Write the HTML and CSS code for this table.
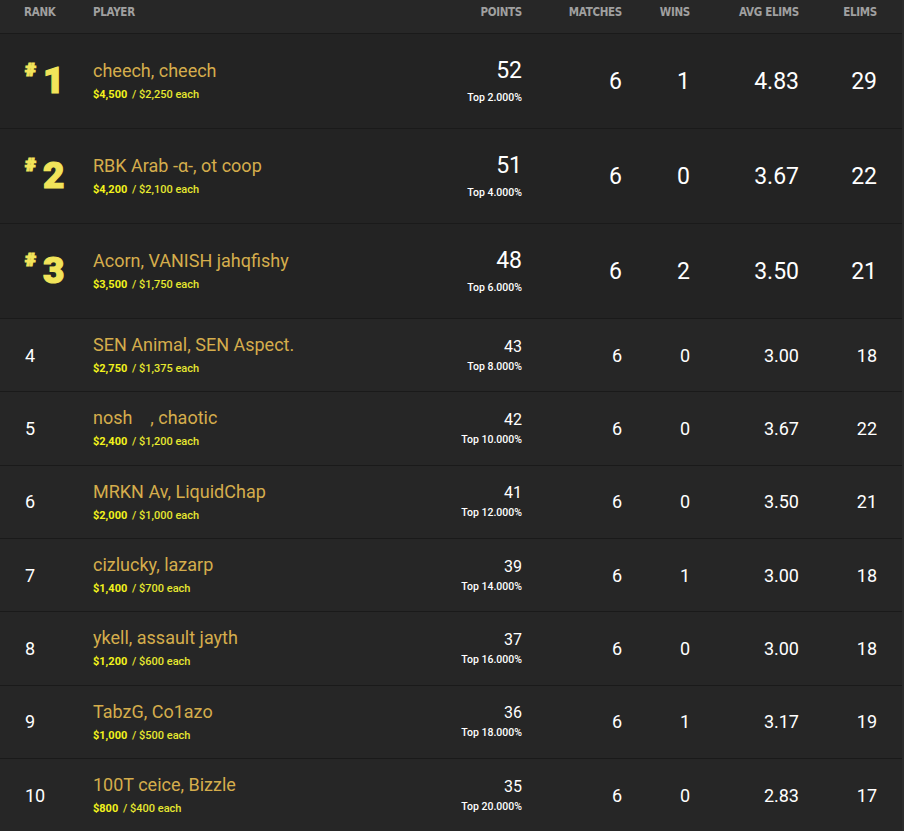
FILE: index.html
```html
<!DOCTYPE html>
<html lang="en">
<head>
    <meta charset="UTF-8">
    <meta name="viewport" content="width=device-width, initial-scale=1.0">
    <title>Leaderboard</title>
    <link rel="stylesheet" href="styles.css">
</head>
<body>
    <div class="board">
        <div class="row head">
            <div>Rank</div>
            <div>Player</div>
            <div class="num">Points</div>
            <div class="num">Matches</div>
            <div class="num">Wins</div>
            <div class="num">Avg Elims</div>
            <div class="num">Elims</div>
        </div>

        <div class="row top">
            <div class="badge"><span class="hash">#</span><span class="place">1</span></div>
            <div class="player">
                <div class="name">cheech, cheech</div>
                <div class="prize"><b>$4,500</b> / $2,250 each</div>
            </div>
            <div class="num points"><div class="pts">52</div><div class="pct">Top 2.000%</div></div>
            <div class="num stat">6</div>
            <div class="num stat">1</div>
            <div class="num stat">4.83</div>
            <div class="num stat">29</div>
        </div>

        <div class="row top">
            <div class="badge"><span class="hash">#</span><span class="place">2</span></div>
            <div class="player">
                <div class="name">RBK Arab -α-, ot coop</div>
                <div class="prize"><b>$4,200</b> / $2,100 each</div>
            </div>
            <div class="num points"><div class="pts">51</div><div class="pct">Top 4.000%</div></div>
            <div class="num stat">6</div>
            <div class="num stat">0</div>
            <div class="num stat">3.67</div>
            <div class="num stat">22</div>
        </div>

        <div class="row top">
            <div class="badge"><span class="hash">#</span><span class="place">3</span></div>
            <div class="player">
                <div class="name">Acorn, VANISH jahqfishy</div>
                <div class="prize"><b>$3,500</b> / $1,750 each</div>
            </div>
            <div class="num points"><div class="pts">48</div><div class="pct">Top 6.000%</div></div>
            <div class="num stat">6</div>
            <div class="num stat">2</div>
            <div class="num stat">3.50</div>
            <div class="num stat">21</div>
        </div>

        <div class="row reg">
            <div class="rank">4</div>
            <div class="player">
                <div class="name">SEN Animal, SEN Aspect.</div>
                <div class="prize"><b>$2,750</b> / $1,375 each</div>
            </div>
            <div class="num points"><div class="pts">43</div><div class="pct">Top 8.000%</div></div>
            <div class="num stat">6</div>
            <div class="num stat">0</div>
            <div class="num stat">3.00</div>
            <div class="num stat">18</div>
        </div>

        <div class="row reg">
            <div class="rank">5</div>
            <div class="player">
                <div class="name">nosh&nbsp;&nbsp;&nbsp;&nbsp;, chaotic</div>
                <div class="prize"><b>$2,400</b> / $1,200 each</div>
            </div>
            <div class="num points"><div class="pts">42</div><div class="pct">Top 10.000%</div></div>
            <div class="num stat">6</div>
            <div class="num stat">0</div>
            <div class="num stat">3.67</div>
            <div class="num stat">22</div>
        </div>

        <div class="row reg">
            <div class="rank">6</div>
            <div class="player">
                <div class="name">MRKN Av, LiquidChap</div>
                <div class="prize"><b>$2,000</b> / $1,000 each</div>
            </div>
            <div class="num points"><div class="pts">41</div><div class="pct">Top 12.000%</div></div>
            <div class="num stat">6</div>
            <div class="num stat">0</div>
            <div class="num stat">3.50</div>
            <div class="num stat">21</div>
        </div>

        <div class="row reg">
            <div class="rank">7</div>
            <div class="player">
                <div class="name">cizlucky, lazarp</div>
                <div class="prize"><b>$1,400</b> / $700 each</div>
            </div>
            <div class="num points"><div class="pts">39</div><div class="pct">Top 14.000%</div></div>
            <div class="num stat">6</div>
            <div class="num stat">1</div>
            <div class="num stat">3.00</div>
            <div class="num stat">18</div>
        </div>

        <div class="row reg">
            <div class="rank">8</div>
            <div class="player">
                <div class="name">ykell, assault jayth</div>
                <div class="prize"><b>$1,200</b> / $600 each</div>
            </div>
            <div class="num points"><div class="pts">37</div><div class="pct">Top 16.000%</div></div>
            <div class="num stat">6</div>
            <div class="num stat">0</div>
            <div class="num stat">3.00</div>
            <div class="num stat">18</div>
        </div>

        <div class="row reg">
            <div class="rank">9</div>
            <div class="player">
                <div class="name">TabzG, Co1azo</div>
                <div class="prize"><b>$1,000</b> / $500 each</div>
            </div>
            <div class="num points"><div class="pts">36</div><div class="pct">Top 18.000%</div></div>
            <div class="num stat">6</div>
            <div class="num stat">1</div>
            <div class="num stat">3.17</div>
            <div class="num stat">19</div>
        </div>

        <div class="row reg">
            <div class="rank">10</div>
            <div class="player">
                <div class="name">100T ceice, Bizzle</div>
                <div class="prize"><b>$800</b> / $400 each</div>
            </div>
            <div class="num points"><div class="pts">35</div><div class="pct">Top 20.000%</div></div>
            <div class="num stat">6</div>
            <div class="num stat">0</div>
            <div class="num stat">2.83</div>
            <div class="num stat">17</div>
        </div>
    </div>
</body>
</html>
```

FILE: styles.css
```css
body {
    margin: 0;
    padding: 0;
    background: #2b2b2b;
    font-family: Roboto, "Liberation Sans", sans-serif;
    color: #fff;
}

.board {
    width: 902px;
}

.row {
    display: grid;
    grid-template-columns: 69px 1fr 100px 100px 68px 109px 78px;
    align-items: center;
    padding: 0 25px 0 24px;
    background: #262626;
    border-bottom: 1px solid #1a1a1a;
}

.head {
    height: 34px;
    align-items: start;
    background: #272727;
    color: #a0a0a0;
    font-family: "DejaVu Sans Condensed", "DejaVu Sans", sans-serif;
    font-size: 11.5px;
    font-weight: bold;
    text-transform: uppercase;
    line-height: 14px;
    padding-top: 5px;
    box-sizing: border-box;
    letter-spacing: -0.3px;
}

.top {
    height: 94px;
    background: #232323;
}

.reg {
    height: 72.33px;
}

.num {
    text-align: right;
}

/* podium ranks */
.badge {
    display: flex;
    align-items: flex-start;
    color: #f1e45a;
    font-weight: 900;
    -webkit-text-stroke: 1.2px #f1e45a;
}

.badge .hash {
    font-size: 19px;
    line-height: 18px;
    margin-top: -3px;
    margin-left: 1px;
    margin-right: 7px;
}

.badge .place {
    font-size: 37px;
    line-height: 34px;
}

.rank {
    font-size: 18px;
    padding-left: 1px;
}

.name {
    color: #d5ad4c;
    font-size: 18px;
    line-height: 22px;
    white-space: nowrap;
}

.prize {
    color: #e6e830;
    font-size: 11px;
    font-weight: 500;
    line-height: 14px;
    margin-top: 6px;
}

.prize b {
    color: #f2f21c;
    font-weight: bold;
    margin-right: 2px;
}

.pts {
    font-size: 16px;
    line-height: 18px;
}

.pct {
    font-size: 10.5px;
    font-weight: 500;
    line-height: 13px;
    margin-top: 4px;
}

.stat {
    font-size: 18px;
}

.top .pts {
    font-size: 23px;
    line-height: 26px;
}

.top .pct {
    margin-top: 7px;
}

.top .stat {
    font-size: 23px;
}
```
